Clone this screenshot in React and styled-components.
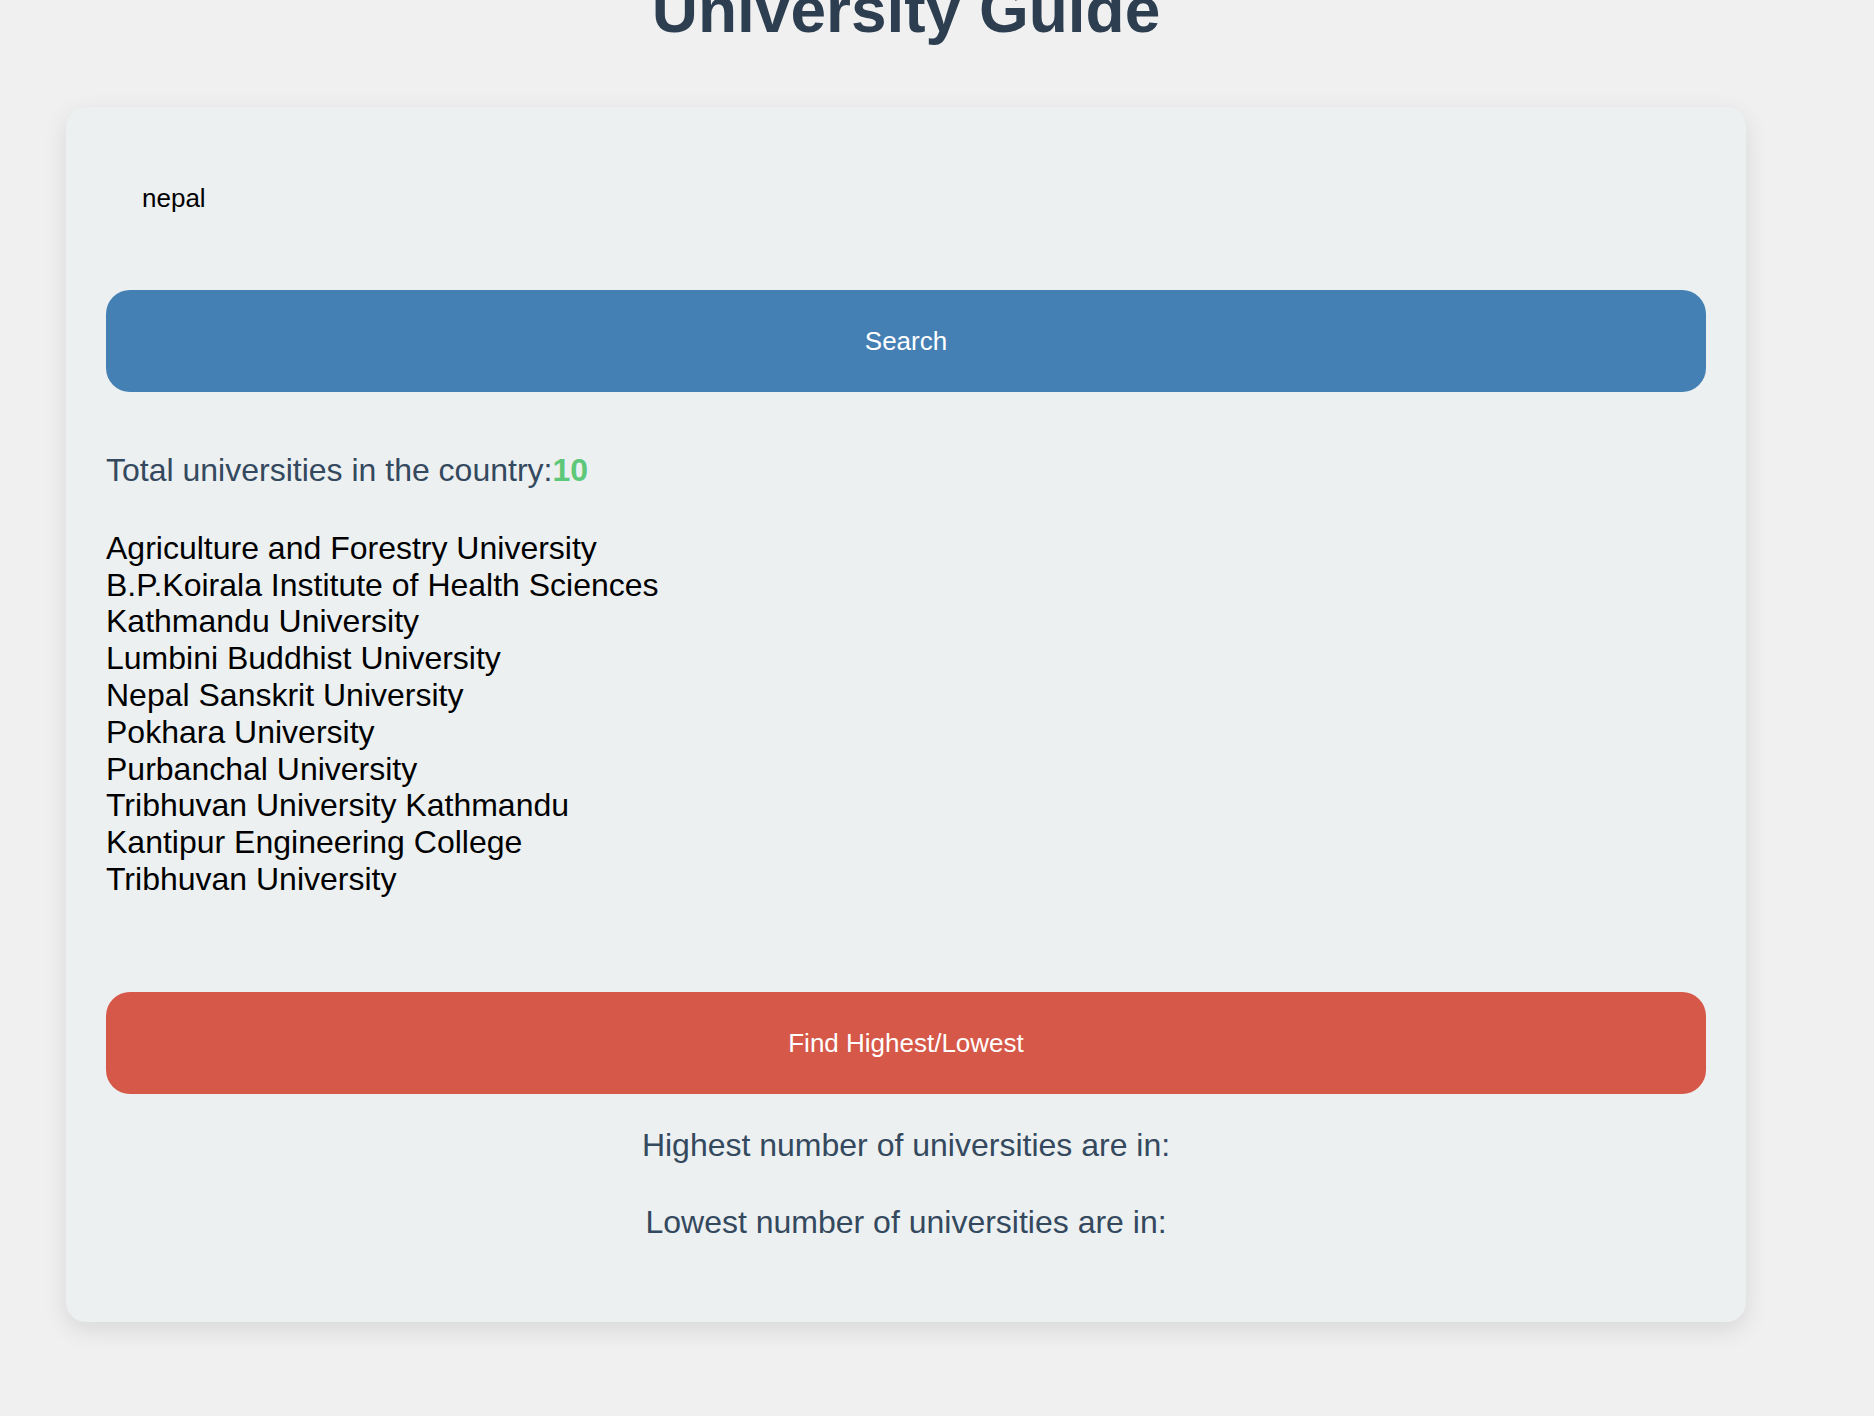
import React from 'react';
import styled, { createGlobalStyle } from 'styled-components';

const GlobalStyle = createGlobalStyle`
body {
    margin: 0;
    background-color: #f0f0f0;
    font-family: "Liberation Sans", Arial, sans-serif;
}
`;

const Page = styled.div`
width: 1680px;
margin-left: 66px;
padding-bottom: 95px;
`;

const Title = styled.h1`
margin: -27px 0 60px;
font-size: 64px;
line-height: 74px;
font-weight: bold;
color: #2c3e50;
text-align: center;
`;

const Card = styled.div`
display: flex;
flex-direction: column;
padding: 40px;
background-color: #ecf0f1;
border-radius: 20px;
box-shadow: 0 8px 24px rgba(0, 0, 0, 0.1);
`;

const SearchInput = styled.input`
margin-bottom: 41px;
padding: 36px;
border: none;
background: transparent;
font-family: inherit;
font-size: 26px;
line-height: 30px;
color: #000;
outline: none;
`;

const Button = styled.button`
width: 100%;
margin-top: ${props => props.$top || 0}px;
padding: 36px;
border: none;
border-radius: 24px;
background-color: ${props => props.$color};
color: #fff;
font-family: inherit;
font-size: 26px;
line-height: 30px;
cursor: pointer;
`;

const Total = styled.p`
margin: 60px 0 41px;
font-size: 32px;
line-height: 1.15;
color: #34495e;

strong {
    color: #5dc879;
}
`;

const UniList = styled.ul`
margin: 0;
padding: 0;
list-style: none;

li {
    font-size: 32px;
    line-height: 1.15;
    color: #000;
}
`;

const Stat = styled.p`
margin: ${props => props.$top}px 0 ${props => props.$bottom || 0}px;
font-size: 32px;
line-height: 1.15;
color: #34495e;
text-align: center;
`;

const universities = [
    "Agriculture and Forestry University",
    "B.P.Koirala Institute of Health Sciences",
    "Kathmandu University",
    "Lumbini Buddhist University",
    "Nepal Sanskrit University",
    "Pokhara University",
    "Purbanchal University",
    "Tribhuvan University Kathmandu",
    "Kantipur Engineering College",
    "Tribhuvan University"
];

const App = () => {
    const uniList = universities.map((name, index) => {
        return <li key={index}>{name}</li>
    })

    return (
        <>
            <GlobalStyle />
            <Page>
                <Title>University Guide</Title>
                <Card>
                    <SearchInput type="text" defaultValue="nepal" />
                    <Button $color="#4580b5">Search</Button>
                    <Total>Total universities in the country:<strong>10</strong></Total>
                    <UniList>{uniList}</UniList>
                    <Button $color="#d65848" $top={94}>Find Highest/Lowest</Button>
                    <Stat $top={33}>Highest number of universities are in:</Stat>
                    <Stat $top={40} $bottom={42}>Lowest number of universities are in:</Stat>
                </Card>
            </Page>
        </>
    )
}

export default App;
